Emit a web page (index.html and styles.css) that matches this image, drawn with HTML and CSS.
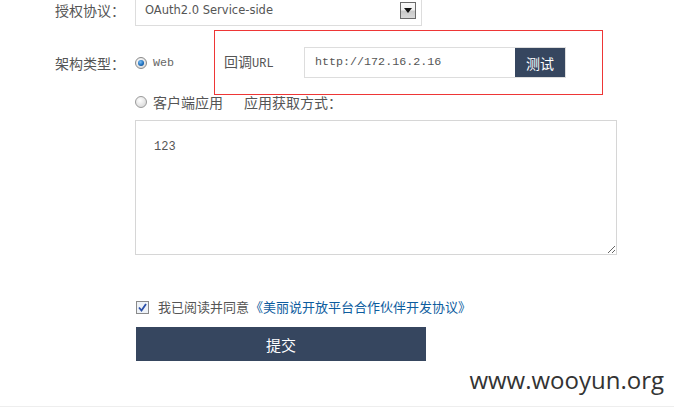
FILE: index.html
```html
<!DOCTYPE html>
<html lang="zh-CN">
<head>
<meta charset="utf-8">
<title>开放平台申请</title>
<link rel="stylesheet" href="styles.css">
</head>
<body>
<div class="page">
  <div class="row row-proto">
    <span class="label">授权协议：</span>
    <div class="select">
      <span class="select-text">OAuth2.0 Service-side</span>
      <span class="select-arrow"><svg width="8" height="5" viewBox="0 0 8 5"><path d="M0 0H8L4 5Z" fill="#111"/></svg></span>
    </div>
  </div>
  <div class="row row-arch">
    <span class="label">架构类型：</span>
    <span class="opt-web"><span class="radio checked"></span><span class="mono web-text">Web</span></span>
    <div class="callback">
      <span class="cb-label">回调<span class="mono">URL</span></span>
      <div class="url-box">
        <span class="url-text mono">http://172.16.2.16</span>
        <button class="btn-test">测试</button>
      </div>
    </div>
  </div>
  <div class="row row-client">
    <span class="radio"></span>
    <span class="client-text">客户端应用</span>
    <span class="how">应用获取方式：</span>
  </div>
  <textarea class="ta">123</textarea>
  <div class="row agree">
    <svg class="check" width="13" height="13" viewBox="0 0 13 13"><rect x="0.5" y="0.5" width="12" height="12" fill="#eef2f7" stroke="#8a8a8a"/><path d="M3 6.5L5.5 9.5L10 3" fill="none" stroke="#2b4fa8" stroke-width="1.8"/></svg>
    <span class="agree-text">我已阅读并同意</span>
    <a class="agree-link" href="#">《美丽说开放平台合作伙伴开发协议》</a>
  </div>
  <button class="submit">提交</button>
</div>
<div class="footer-line"></div>
<div class="watermark">www.wooyun.org</div>
</body>
</html>
```

FILE: styles.css
```css
html, body {
  margin: 0;
  padding: 0;
  background: #fff;
}
body {
  position: relative;
  width: 674px;
  height: 409px;
  overflow: hidden;
  font-family: "Noto Sans CJK SC", "Liberation Sans", sans-serif;
  font-size: 14px;
  color: #555;
}
.page {
  padding-left: 55px;
  margin-top: -6px;
}
.row {
  display: flex;
  align-items: center;
}
.mono {
  font-family: "Liberation Mono", "DejaVu Sans Mono", monospace;
  font-size: 11.7px;
}
.label {
  width: 80px;
  line-height: 16px;
  white-space: nowrap;
}
.row-proto {
  height: 32px;
}
.select {
  box-sizing: border-box;
  width: 287px;
  height: 32px;
  border: 1px solid #ddd;
  display: flex;
  align-items: center;
  padding-left: 9px;
  padding-right: 5px;
}
.select-text {
  flex: 1;
  font-family: "DejaVu Sans", sans-serif;
  font-size: 11.5px;
  color: #555;
}
.select-arrow {
  box-sizing: border-box;
  width: 16px;
  height: 17px;
  border: 1px solid #6a6a6a;
  background: linear-gradient(#fafafa, #f0f0f0 45%, #c9c9c9 55%, #d8d8d8);
  display: flex;
  align-items: center;
  justify-content: center;
}
.row-arch {
  margin-top: 4px;
  height: 65px;
}
.opt-web {
  width: 79px;
  display: flex;
  align-items: center;
}
.web-text {
  margin-left: 6px;
  color: #666;
}
.radio {
  box-sizing: border-box;
  width: 12px;
  height: 12px;
  border-radius: 50%;
  border: 1px solid #9a9a9a;
  background: radial-gradient(circle at 40% 35%, #fff, #d0d0d0);
  display: flex;
  align-items: center;
  justify-content: center;
  flex: none;
}
.radio.checked {
  border-color: #8a8a8a;
}
.radio.checked::after {
  content: "";
  width: 6px;
  height: 6px;
  border-radius: 50%;
  background: radial-gradient(circle at 40% 35%, #7cc0f5, #1769b8 60%, #0a3f78);
}
.callback {
  box-sizing: border-box;
  width: 389px;
  height: 65px;
  border: 1px solid #ee3636;
  padding-left: 9px;
  display: flex;
  align-items: center;
}
.cb-label {
  width: 80px;
  line-height: 16px;
  white-space: nowrap;
}
.cb-label .mono {
  font-size: 12px;
}
.url-box {
  box-sizing: border-box;
  width: 262px;
  height: 31px;
  border: 1px solid #ddd;
  display: flex;
}
.url-text {
  flex: 1;
  padding-left: 10px;
  line-height: 29px;
  color: #555;
}
.btn-test {
  width: 50px;
  height: 29px;
  border: 0;
  margin: 0;
  padding: 0;
  background: #36465f;
  color: #fff;
  font-family: "Noto Sans CJK SC", sans-serif;
  font-size: 14px;
}
.row-client {
  height: 14px;
  padding-left: 80px;
  line-height: 14px;
}
.client-text {
  margin-left: 6px;
}
.how {
  margin-left: 21px;
}
.ta {
  display: block;
  box-sizing: border-box;
  margin: 11px 0 0 80px;
  width: 482px;
  height: 135px;
  border: 1px solid #d6d6d6;
  padding: 18px 18px;
  font-family: "Liberation Mono", "DejaVu Sans Mono", monospace;
  font-size: 12px;
  line-height: 16px;
  color: #555;
  resize: both;
  outline: none;
}
.agree {
  margin-top: 45px;
  height: 14px;
  padding-left: 81px;
  font-size: 13px;
  line-height: 14px;
}
.check {
  flex: none;
}
.agree-text {
  margin-left: 9px;
}
.agree-link {
  margin-left: 1px;
  color: #0d5c9e;
  text-decoration: none;
}
.submit {
  display: block;
  margin: 13px 0 0 81px;
  width: 290px;
  height: 34px;
  border: 0;
  padding: 0;
  background: #36465f;
  color: #fff;
  font-family: "Noto Sans CJK SC", sans-serif;
  font-size: 15px;
}
.footer-line {
  margin-top: 45px;
  height: 1px;
  background: #eee;
}
.watermark {
  position: absolute;
  right: 10px;
  top: 363px;
  font-family: "Open Sans", "DejaVu Sans", sans-serif;
  font-size: 24px;
  color: #333;
  line-height: 34px;
}
```
